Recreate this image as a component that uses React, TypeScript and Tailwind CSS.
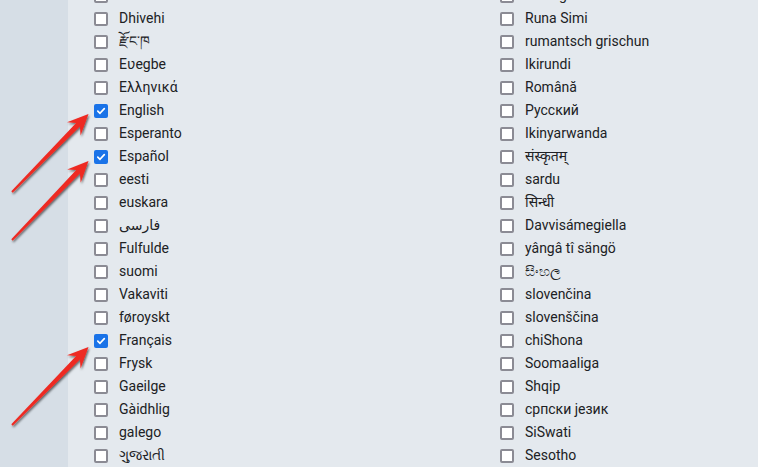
import React from 'react';

const leftLangs: [string, boolean][] = [
  ['Deutsch', false],
  ['Dhivehi', false],
  ['རྫོང་ཁ', false],
  ['Eʋegbe', false],
  ['Ελληνικά', false],
  ['English', true],
  ['Esperanto', false],
  ['Español', true],
  ['eesti', false],
  ['euskara', false],
  ['فارسی', false],
  ['Fulfulde', false],
  ['suomi', false],
  ['Vakaviti', false],
  ['føroyskt', false],
  ['Français', true],
  ['Frysk', false],
  ['Gaeilge', false],
  ['Gàidhlig', false],
  ['galego', false],
  ['ગુજરાતી', false],
];

const rightLangs: [string, boolean][] = [
  ['Português', false],
  ['Runa Simi', false],
  ['rumantsch grischun', false],
  ['Ikirundi', false],
  ['Română', false],
  ['Русский', false],
  ['Ikinyarwanda', false],
  ['संस्कृतम्', false],
  ['sardu', false],
  ['सिन्धी', false],
  ['Davvisámegiella', false],
  ['yângâ tî sängö', false],
  ['සිංහල', false],
  ['slovenčina', false],
  ['slovenščina', false],
  ['chiShona', false],
  ['Soomaaliga', false],
  ['Shqip', false],
  ['српски језик', false],
  ['SiSwati', false],
  ['Sesotho', false],
];

const Box: React.FC<{ checked: boolean }> = ({ checked }) =>
  checked ? (
    <span className="w-[14px] h-[14px] shrink-0 rounded-[2px] bg-[#1a73e8] flex items-center justify-center">
      <svg width="10" height="10" viewBox="0 0 10 10">
        <path d="M1.8 5.2 L4 7.3 L8.3 2.6" fill="none" stroke="#fff" strokeWidth="1.7" strokeLinecap="round" strokeLinejoin="round" />
      </svg>
    </span>
  ) : (
    <span className="w-[14px] h-[14px] shrink-0 rounded-[2px] border-2 border-[#8b8b94] bg-white" />
  );

const LangColumn: React.FC<{ items: [string, boolean][] }> = ({ items }) => (
  <div className="flex flex-col">
    {items.map(([name, checked]) => (
      <div key={name} className="h-[23px] flex items-center gap-[11px]">
        <Box checked={checked} />
        <span className="text-[14px] text-[#202124] whitespace-nowrap">{name}</span>
      </div>
    ))}
  </div>
);

// arrow polygon from tail to tip, tapered shaft + filled head
const arrowPoints = (tx: number, ty: number, hx: number, hy: number) => {
  const dx = hx - tx;
  const dy = hy - ty;
  const len = Math.hypot(dx, dy);
  const ux = dx / len, uy = dy / len;
  const nx = -uy, ny = ux;
  const headLen = 21, headW = 9.5, notch = 15, shaft = 2.6, tail = 1;
  const bx = hx - ux * headLen, by = hy - uy * headLen;
  const cx = hx - ux * notch, cy = hy - uy * notch;
  const pts = [
    [tx + nx * tail, ty + ny * tail],
    [cx + nx * shaft, cy + ny * shaft],
    [bx + nx * headW, by + ny * headW],
    [hx, hy],
    [bx - nx * headW, by - ny * headW],
    [cx - nx * shaft, cy - ny * shaft],
    [tx - nx * tail, ty - ny * tail],
  ];
  return pts.map(p => p.map(v => v.toFixed(1)).join(',')).join(' ');
};

export default function App() {
  return (
    <div className="relative w-[758px] h-[467px] overflow-hidden flex" style={{ fontFamily: 'Roboto, "Noto Sans", "DejaVu Sans", sans-serif' }}>
      <div className="w-[68px] shrink-0 bg-[#d6dee6]" />
      <div className="flex-1 bg-[#e4e9ee] pl-[26px]">
        <div className="grid grid-cols-[406px_1fr] -mt-[16px]">
          <LangColumn items={leftLangs} />
          <LangColumn items={rightLangs} />
        </div>
      </div>
      <svg className="absolute inset-0 pointer-events-none" width="758" height="467">
        <defs>
          <filter id="shadow" x="-20%" y="-20%" width="140%" height="140%">
            <feDropShadow dx="1" dy="1.5" stdDeviation="0.8" floodColor="#000" floodOpacity="0.6" />
          </filter>
        </defs>
        <g fill="#ee2a24" filter="url(#shadow)">
          <polygon points={arrowPoints(12, 192, 88.5, 114)} />
          <polygon points={arrowPoints(12, 240, 88.5, 161)} />
          <polygon points={arrowPoints(12, 425, 88.5, 347)} />
        </g>
      </svg>
    </div>
  );
}
